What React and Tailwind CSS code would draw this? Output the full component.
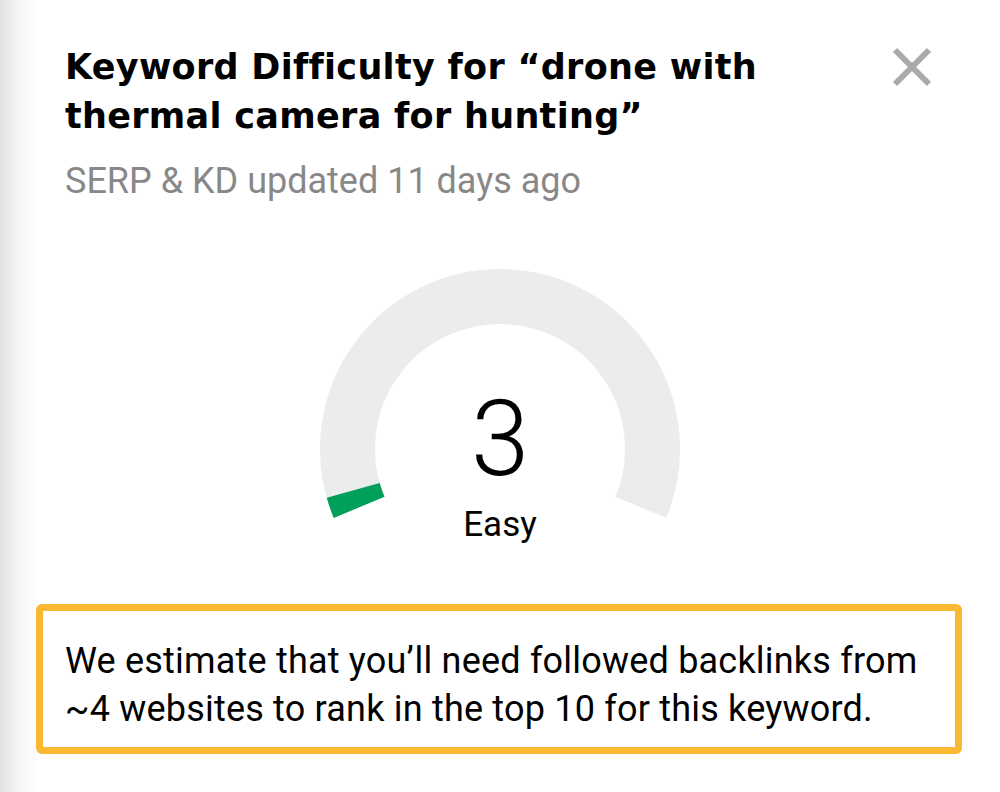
import React from 'react';

const Gauge = ({ value, label }) => {
    // arc spans 225deg, from 22.5deg below horizontal on the left to the same on the right
    const cx = 200;
    const cy = 190;
    const r = 152.5;
    const start = 202.5;
    const sweep = 225;
    const point = (deg) => {
        const rad = (deg * Math.PI) / 180;
        return [cx + r * Math.cos(rad), cy - r * Math.sin(rad)];
    };
    const [sx, sy] = point(start);
    const [ex, ey] = point(start - sweep);
    const [gx, gy] = point(start - (sweep * value) / 100);

    return (
        <div className="relative w-[400px] h-[300px]">
            <svg width="400" height="300" viewBox="0 0 400 300">
                <path
                    d={`M ${sx} ${sy} A ${r} ${r} 0 1 1 ${ex} ${ey}`}
                    fill="none"
                    stroke="#ebecee"
                    strokeWidth="55"
                />
                <path
                    d={`M ${sx} ${sy} A ${r} ${r} 0 0 1 ${gx} ${gy}`}
                    fill="none"
                    stroke="#00a05a"
                    strokeWidth="55"
                />
            </svg>
            <div className="absolute left-0 right-0 top-[121px] flex flex-col items-center text-black">
                <span className="text-[105px] leading-[120px] font-light">{value}</span>
                <span className="text-[35px] leading-[40px] mt-[5px]">{label}</span>
            </div>
        </div>
    );
};

const App = () => {
    return (
        <div className="min-h-screen w-full bg-[linear-gradient(to_right,#e2e2e2_0px,#f6f6f6_20px,#ffffff_40px)] font-['Roboto',sans-serif]">
            <div className="flex justify-between pl-[65px] pr-[68px] pt-[43px]">
                <div>
                    <h1 className="font-['DejaVu_Sans',sans-serif] font-bold text-[35px] leading-[49px] tracking-[0.3px] text-black">
                        Keyword Difficulty for “drone with
                        <br />
                        thermal camera for hunting”
                    </h1>
                    <p className="mt-[18px] text-[36px] leading-[44px] text-[#888888]">
                        SERP &amp; KD updated 11 days ago
                    </p>
                </div>
                <button className="w-[40px] h-[40px] mt-[4px]" aria-label="Close">
                    <svg width="40" height="40" viewBox="0 0 40 40">
                        <path d="M3 3 L37 37 M37 3 L3 37" stroke="#aaaaaa" strokeWidth="6" />
                    </svg>
                </button>
            </div>

            <div className="flex justify-center mt-[56px]">
                <Gauge value={3} label="Easy" />
            </div>

            <div className="ml-[36px] w-[926px] mt-[45px] border-[7px] border-[#fbb933] rounded-[6px] bg-white pl-[22px] pr-4 pt-[26px] pb-[14px]">
                <p className="text-[36px] leading-[48px] tracking-[0.2px] text-black">
                    We estimate that you’ll need followed backlinks from
                    <br />
                    ~4 websites to rank in the top 10 for this keyword.
                </p>
            </div>
        </div>
    );
};

export default App;
